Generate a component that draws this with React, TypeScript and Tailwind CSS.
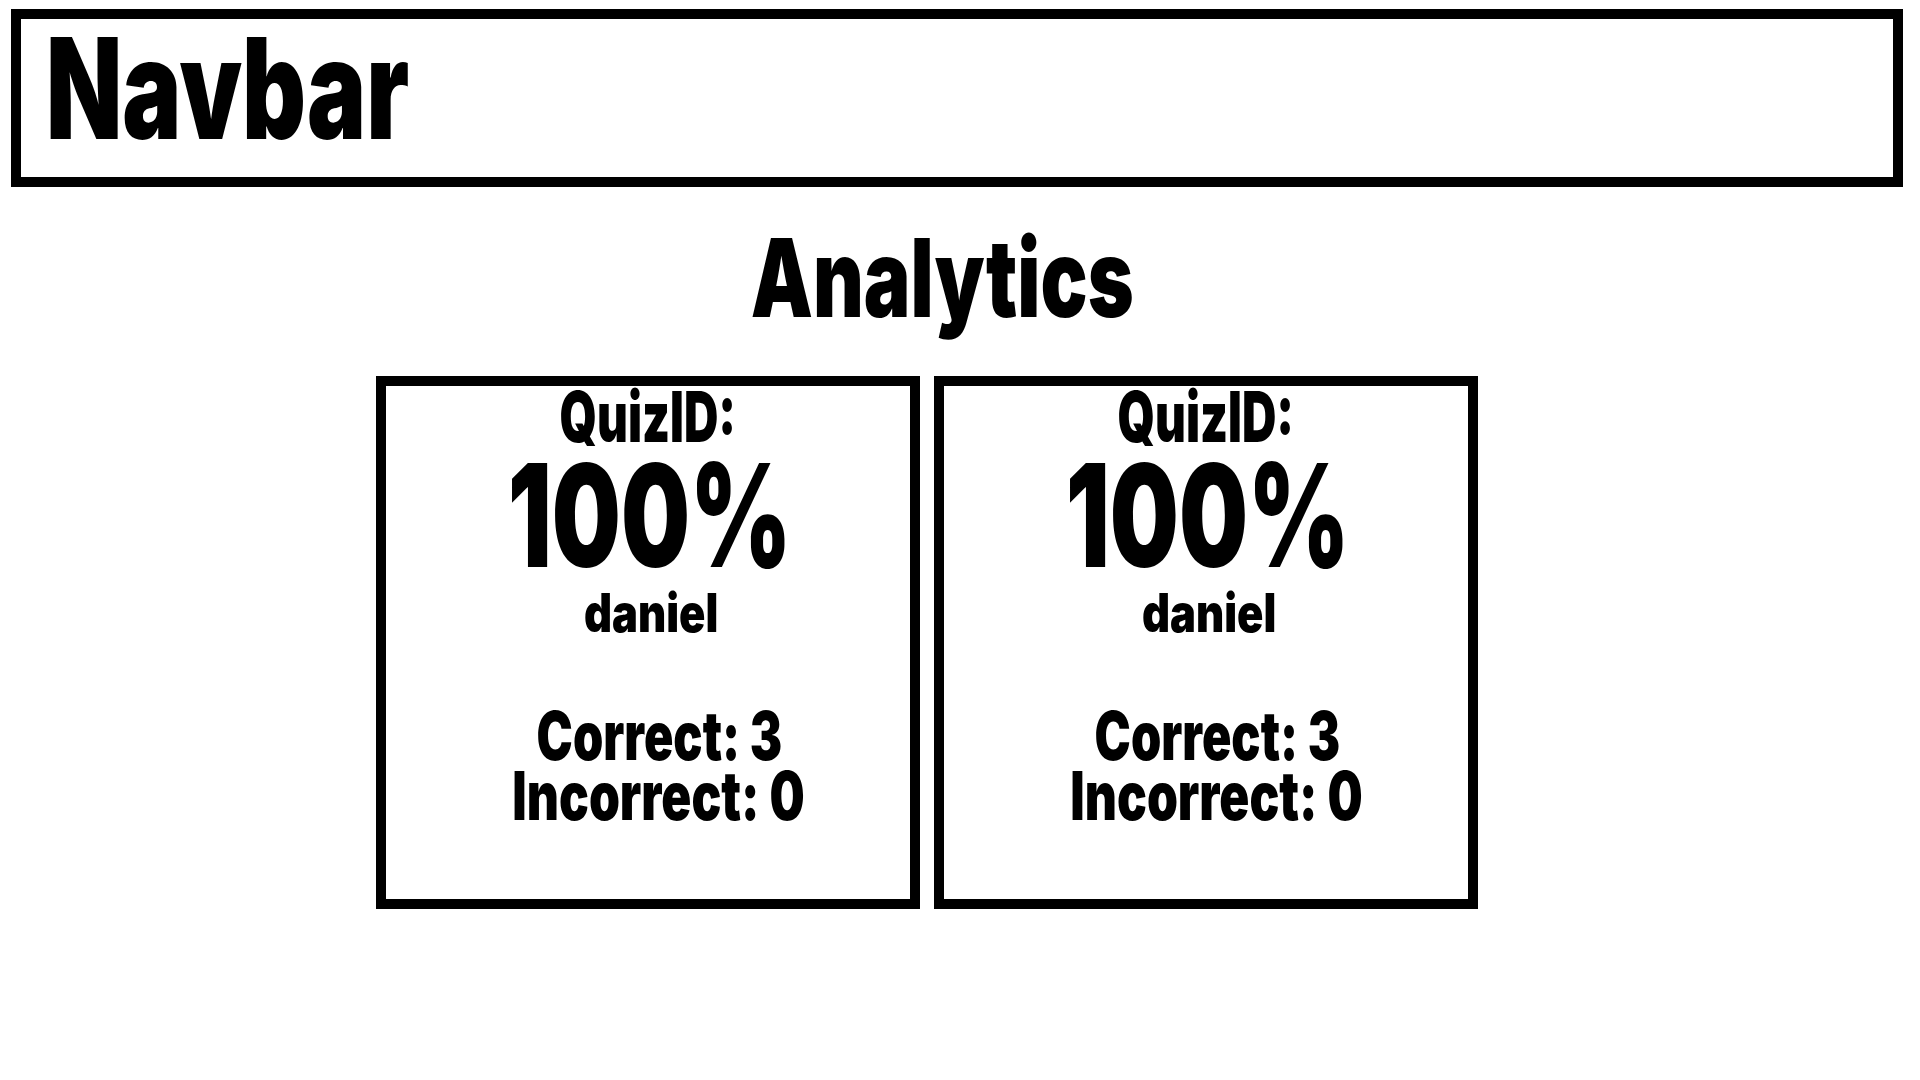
import React from 'react';

interface Attempt {
  id: number;
  quizId: string;
  score: number;
  username: string;
  correct: number;
  incorrect: number;
}

const attempts: Attempt[] = [
  { id: 1, quizId: '', score: 100, username: 'daniel', correct: 3, incorrect: 0 },
  { id: 2, quizId: '', score: 100, username: 'daniel', correct: 3, incorrect: 0 },
];

const Navbar: React.FC = () => (
  <div className="ml-[11px] mt-[9px] w-[1892px] h-[178px] border-[10px] border-black pl-[25px]">
    <span className="inline-block origin-left scale-x-[0.708] text-[140px] leading-[138px] font-black text-black">
      Navbar
    </span>
  </div>
);

const AttemptCard: React.FC<{ attempt: Attempt }> = ({ attempt }) => (
  <div className="w-[544px] h-[533px] border-[10px] border-black flex flex-col items-center text-black font-black">
    <span className="inline-block scale-x-[0.68] text-[70px] leading-[62px]">
      QuizID:{attempt.quizId}
    </span>
    <span className="inline-block scale-x-[0.68] pl-[6px] text-[143px] leading-[133px]">
      {attempt.score}%
    </span>
    <span className="inline-block scale-x-[0.82] pl-[8px] text-[53px] leading-[64px]">
      {attempt.username}
    </span>
    <div className="mt-[61px] pl-[22px] flex flex-col items-center">
      <span className="inline-block scale-x-[0.725] text-[67px] leading-[60px]">
        Correct: {attempt.correct}
      </span>
      <span className="inline-block scale-x-[0.74] text-[67px] leading-[60px]">
        Incorrect: {attempt.incorrect}
      </span>
    </div>
  </div>
);

const App: React.FC = () => {
  return (
    <div className="min-h-screen bg-white font-['Inter',sans-serif]">
      <Navbar />

      {/* Titulo */}
      <div className="mt-[37px] flex justify-center pr-[36px]">
        <h1 className="inline-block scale-x-[0.725] text-[108px] leading-[108px] font-black text-black">
          Analytics
        </h1>
      </div>

      {/* Cartoes */}
      <div className="mt-[44px] pl-[376px] flex gap-[14px]">
        {attempts.map((a) => (
          <AttemptCard key={a.id} attempt={a} />
        ))}
      </div>
    </div>
  );
};

export default App;
